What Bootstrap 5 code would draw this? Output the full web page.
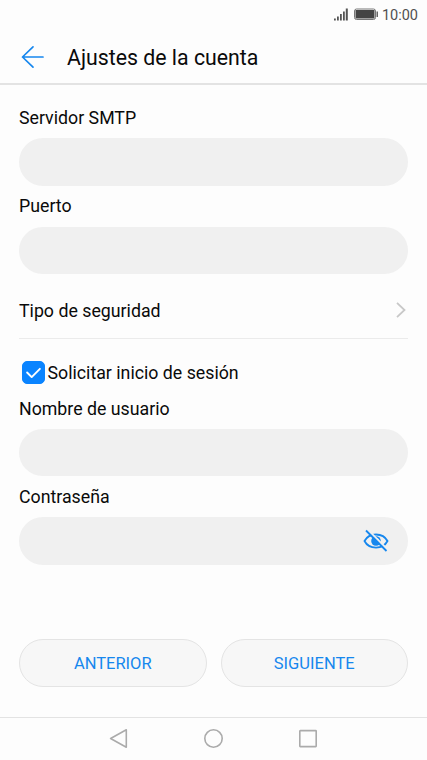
<!DOCTYPE html>
<html lang="es">
<head>
<meta charset="utf-8">
<meta name="viewport" content="width=device-width, initial-scale=1">
<title>Ajustes de la cuenta</title>
<link href="https://cdn.jsdelivr.net/npm/bootstrap@5.3.0/dist/css/bootstrap.min.css" rel="stylesheet">
<style>
body { font-family: Roboto, "Liberation Sans", sans-serif; background: #fdfdfd; color: #0a0a0a; font-size: 17.75px; height: 760px; }
svg { display: block; flex: none; }
.status-bar { height: 30px; padding-right: 9px; font-size: 14.5px; color: #505050; }
.status-bar span { padding-top: 1px; }
.title-bar { height: 55px; padding: 0 21px; border-bottom: 2px solid #e3e3e3; }
.title-bar h1 { font-size: 21.3px; font-weight: 400; margin-left: 22px; padding-top: 3px; }
.content { padding: 12.4px 19px 0; }
.field-label { height: 41px; line-height: 41px; padding-top: .6px; }
.field-box.form-control { height: 47.3px; background: #f0f0f0; border: 0; border-radius: 24px; }
.security-row { height: 64.6px; padding-top: 9px; border-bottom: 1px solid #ebebeb; color: inherit; }
.security-row span { padding-top: 2.4px; }
.login-row { height: 49.6px; padding: 18px 0 0 3px; }
.login-row label { padding-top: 2.4px; }
.login-row .form-check-input { width: 23px; height: 23px; border-radius: 5px; margin: 0 2.5px 0 0; flex: none; }
.login-row .form-check-input:checked { background-color: #0a84ff; border-color: #0a84ff; background-size: 100%; background-image: url("data:image/svg+xml,%3Csvg xmlns='http://www.w3.org/2000/svg' viewBox='0 0 23 23'%3E%3Cpath fill='none' stroke='%23fff' stroke-width='2.1' stroke-linecap='round' stroke-linejoin='round' d='M4.5 11.5l5 5L18.5 7.5'/%3E%3C/svg%3E"); }
.eye-btn { top: 0; right: 19px; height: 47px; }
.actions { padding: 0 19px; gap: 14px; margin-bottom: 30px; }
.actions .btn { height: 48px; padding-top: 7px; padding-bottom: 5px; font-size: 16.5px; color: #1687ee; background: #f7f7f7; border: 1px solid #e4e4e4; }
.system-nav { height: 43px; border-top: 1px solid #e3e3e3; gap: 75px; padding-right: 1px; }
</style>
<script defer src="https://cdn.jsdelivr.net/npm/bootstrap@5.3.0/dist/js/bootstrap.bundle.min.js"></script>
</head>
<body class="d-flex flex-column overflow-hidden">
<div class="status-bar d-flex align-items-center justify-content-end">
  <svg width="15" height="14" viewBox="0 0 15 14" fill="#555"><path d="M1 10.500h1.800v2H1zM4 8.500h1.800v4H4zM7 6h1.800v6.500H7zM10 3.500h1.800v9H10zM12.800 .5h2v12h-2z"/></svg>
  <svg class="ms-1" width="26" height="14" viewBox="0 0 26 14"><rect x="2.500" y="1" width="21" height="10.500" rx="2" fill="none" stroke="#777"/><rect x="3.500" y="2" width="19" height="8.500" fill="#444"/><path d="M24.500 3.500h1.500v5.500h-1.500z" fill="#666"/></svg>
  <span class="ms-1">10:00</span>
</div>
<header class="title-bar d-flex align-items-center">
  <svg width="24" height="24" viewBox="0 0 24 24" fill="none" stroke="#1687ee" stroke-width="1.700" stroke-linecap="round" stroke-linejoin="round"><path d="M22 12H1.500M12 1.800L1.500 12 12 22.200"/></svg>
  <h1 class="mb-0">Ajustes de la cuenta</h1>
</header>
<main class="content flex-grow-1">
  <label class="field-label d-block" for="smtp">Servidor SMTP</label>
  <input class="field-box form-control" id="smtp" type="text">
  <label class="field-label d-block" for="port">Puerto</label>
  <input class="field-box form-control" id="port" type="text">
  <a href="#" class="security-row d-flex align-items-center justify-content-between text-decoration-none">
    <span>Tipo de seguridad</span>
    <svg width="13" height="18" viewBox="0 0 13 18" fill="none" stroke="#c8c8c8" stroke-width="1.800"><path d="M2 1.800L9.500 9 2 16.200"/></svg>
  </a>
  <div class="login-row d-flex align-items-center">
    <input class="form-check-input" type="checkbox" id="login" checked>
    <label for="login">Solicitar inicio de sesión</label>
  </div>
  <label class="field-label d-block" for="user">Nombre de usuario</label>
  <input class="field-box form-control" id="user" type="text">
  <label class="field-label d-block" for="pass">Contraseña</label>
  <div class="position-relative">
    <input class="field-box form-control" id="pass" type="password">
    <button type="button" class="eye-btn btn p-0 border-0 position-absolute d-flex align-items-center" aria-label="Mostrar contraseña">
      <svg width="26" height="24" viewBox="0 0 26 24" fill="none" stroke="#1687ee" stroke-width="1.800"><path d="M1.500 12C6 3.300 20 3.300 24.500 12 20 20.700 6 20.700 1.500 12z"/><circle cx="13" cy="12" r="4.800" fill="#1687ee" stroke="none"/><path d="M13.500 9.500a3 3 0 0 1 2.300 2" stroke="#f0f0f0" stroke-width="1.200"/><path d="M4.200 .2L25 21" stroke="#f0f0f0" stroke-width="2"/><path d="M3 1.500L23.500 22"/></svg>
    </button>
  </div>
</main>
<div class="actions d-flex">
  <button type="button" class="btn rounded-pill flex-fill w-50">ANTERIOR</button>
  <button type="button" class="btn rounded-pill flex-fill w-50">SIGUIENTE</button>
</div>
<nav class="system-nav d-flex align-items-center justify-content-center" aria-label="Sistema">
  <svg width="20" height="20" viewBox="0 0 20 20" fill="none" stroke="#ababab" stroke-width="1.600" stroke-linejoin="round"><path d="M18.300 .8v17.400L2.600 9.500z"/></svg>
  <svg width="20" height="20" viewBox="0 0 20 20" fill="none" stroke="#ababab" stroke-width="1.600"><circle cx="10.500" cy="9.500" r="8.700"/></svg>
  <svg width="20" height="20" viewBox="0 0 20 20" fill="none" stroke="#ababab" stroke-width="1.600"><rect x="1.800" y="1.600" width="16.400" height="16" rx=".5"/></svg>
</nav>
</body>
</html>
